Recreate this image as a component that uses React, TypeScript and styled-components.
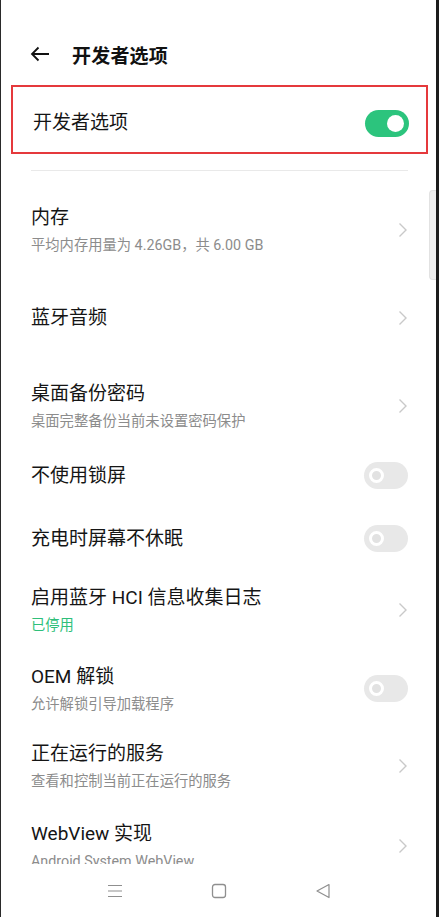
import React from 'react';
import styled, { createGlobalStyle } from 'styled-components';

const GlobalStyle = createGlobalStyle`
  html, body {
    margin: 0;
    padding: 0;
    background: #1e1e1e;
  }
  body {
    font-family: Roboto, "Noto Sans CJK SC", sans-serif;
    -webkit-font-smoothing: antialiased;
  }
`;

const Screen = styled.div`
  position: relative;
  width: 439px;
  height: 917px;
  box-sizing: border-box;
  border-left: 1px solid #2a2a2a;
  border-right: 3px solid #1c1c1c;
  background: #fff;
  display: flex;
  flex-direction: column;
  overflow: hidden;
`;

const Content = styled.div`
  flex: 1;
  min-height: 0;
  overflow: hidden;
`;

const Header = styled.div`
  height: 44px;
  margin: 32px 0 9px;
  padding-left: 29px;
  display: flex;
  align-items: center;
  gap: 22px;
`;

const HeaderTitle = styled.div`
  font-size: 19px;
  font-weight: 700;
  color: #111;
  letter-spacing: 0.2px;
`;

const Highlight = styled.div`
  margin: 0 8px 0 10px;
  height: 69px;
  box-sizing: border-box;
  border: 2px solid #e5393c;
  padding: 7px 17px 0 20px;
  display: flex;
  align-items: center;
  justify-content: space-between;
`;

const Divider = styled.div`
  height: 1px;
  background: #e9e9e9;
  margin: 16px 28px 0 30px;
`;

const List = styled.div`
  margin-top: 20px;
`;

const Row = styled.div<{ h: number }>`
  height: ${p => p.h}px;
  padding: 0 28px 0 30px;
  display: flex;
  align-items: center;
  justify-content: space-between;
`;

const TextBlock = styled.div`
  display: flex;
  flex-direction: column;
`;

const Title = styled.div`
  font-size: 19px;
  line-height: 26px;
  color: #151515;
  white-space: nowrap;
`;

const Sub = styled.div<{ green?: boolean }>`
  margin-top: 4px;
  font-size: 14.3px;
  line-height: 20px;
  color: ${p => (p.green ? '#2fbf7a' : '#8c8c8c')};
  white-space: nowrap;
`;

const Track = styled.div<{ on?: boolean }>`
  width: 44px;
  height: 27px;
  border-radius: 14px;
  background: ${p => (p.on ? '#2cc47d' : '#e8e8e8')};
  display: flex;
  align-items: center;
  justify-content: ${p => (p.on ? 'flex-end' : 'flex-start')};
  padding: 0 5px 0 5px;
  box-sizing: border-box;
  flex-shrink: 0;
`;

const Knob = styled.div<{ on?: boolean }>`
  width: ${p => (p.on ? 17 : 15)}px;
  height: ${p => (p.on ? 17 : 15)}px;
  border-radius: 50%;
  box-sizing: border-box;
  background: ${p => (p.on ? '#fff' : '#e2e2e2')};
  border: ${p => (p.on ? 'none' : '3.5px solid #fff')};
`;

const Chevron = styled.svg`
  flex-shrink: 0;
  width: 10px;
  height: 16px;
`;

const ScrollThumb = styled.div`
  position: absolute;
  right: 0;
  top: 190px;
  width: 6px;
  height: 88px;
  border-radius: 4px 0 0 4px;
  background: #efefef;
  border: 1px solid #e2e2e2;
  border-right: none;
`;

const NavBar = styled.div`
  height: 53px;
  flex-shrink: 0;
  background: #fff;
  display: flex;
  align-items: center;
  justify-content: center;
  gap: 88px;
`;

const NavIcon = styled.svg`
  width: 16px;
  height: 16px;
`;

const Toggle: React.FC<{ on?: boolean }> = ({ on }) => (
  <Track on={on}>
    <Knob on={on} />
  </Track>
);

const Arrow = () => (
  <Chevron viewBox="0 0 10 16">
    <path d="M1.5 1.5 L8 8 L1.5 14.5" fill="none" stroke="#c9c9c9" strokeWidth="1.4" />
  </Chevron>
);

interface Item {
  title: string;
  sub?: string;
  green?: boolean;
  kind: 'arrow' | 'toggle';
  h: number;
}

const items: Item[] = [
  { title: '内存', sub: '平均内存用量为 4.26GB，共 6.00 GB', kind: 'arrow', h: 78 },
  { title: '蓝牙音频', kind: 'arrow', h: 97 },
  { title: '桌面备份密码', sub: '桌面完整备份当前未设置密码保护', kind: 'arrow', h: 80 },
  { title: '不使用锁屏', kind: 'toggle', h: 59 },
  { title: '充电时屏幕不休眠', kind: 'toggle', h: 67 },
  { title: '启用蓝牙 HCI 信息收集日志', sub: '已停用', green: true, kind: 'arrow', h: 76 },
  { title: 'OEM 解锁', sub: '允许解锁引导加载程序', kind: 'toggle', h: 81 },
  { title: '正在运行的服务', sub: '查看和控制当前正在运行的服务', kind: 'arrow', h: 74 },
  { title: 'WebView 实现', sub: 'Android System WebView', kind: 'arrow', h: 86 },
];

export default function App() {
  return (
    <>
      <GlobalStyle />
      <Screen>
        <Content>
          <Header>
            <svg width="20" height="16" viewBox="0 0 20 16">
              <path d="M19 8 H2 M8.5 1.5 L2 8 L8.5 14.5" fill="none" stroke="#111" strokeWidth="1.8" />
            </svg>
            <HeaderTitle>开发者选项</HeaderTitle>
          </Header>
          <Highlight>
            <Title>开发者选项</Title>
            <Toggle on />
          </Highlight>
          <Divider />
          <List>
            {items.map(item => (
              <Row key={item.title} h={item.h}>
                <TextBlock>
                  <Title>{item.title}</Title>
                  {item.sub && <Sub green={item.green}>{item.sub}</Sub>}
                </TextBlock>
                {item.kind === 'arrow' ? <Arrow /> : <Toggle />}
              </Row>
            ))}
          </List>
        </Content>
        <NavBar>
          <NavIcon viewBox="0 0 16 16">
            <path d="M1 2.5 H15 M1 8 H15 M1 13.5 H15" stroke="#8f8f8f" strokeWidth="1.2" />
          </NavIcon>
          <NavIcon viewBox="0 0 16 16">
            <rect x="1.5" y="1.5" width="13" height="13" rx="2.5" fill="none" stroke="#8f8f8f" strokeWidth="1.3" />
          </NavIcon>
          <NavIcon viewBox="0 0 16 16">
            <path d="M14 1.5 L2 8 L14 14.5 Z" fill="none" stroke="#8f8f8f" strokeWidth="1.2" strokeLinejoin="round" />
          </NavIcon>
        </NavBar>
        <ScrollThumb />
      </Screen>
    </>
  );
}
